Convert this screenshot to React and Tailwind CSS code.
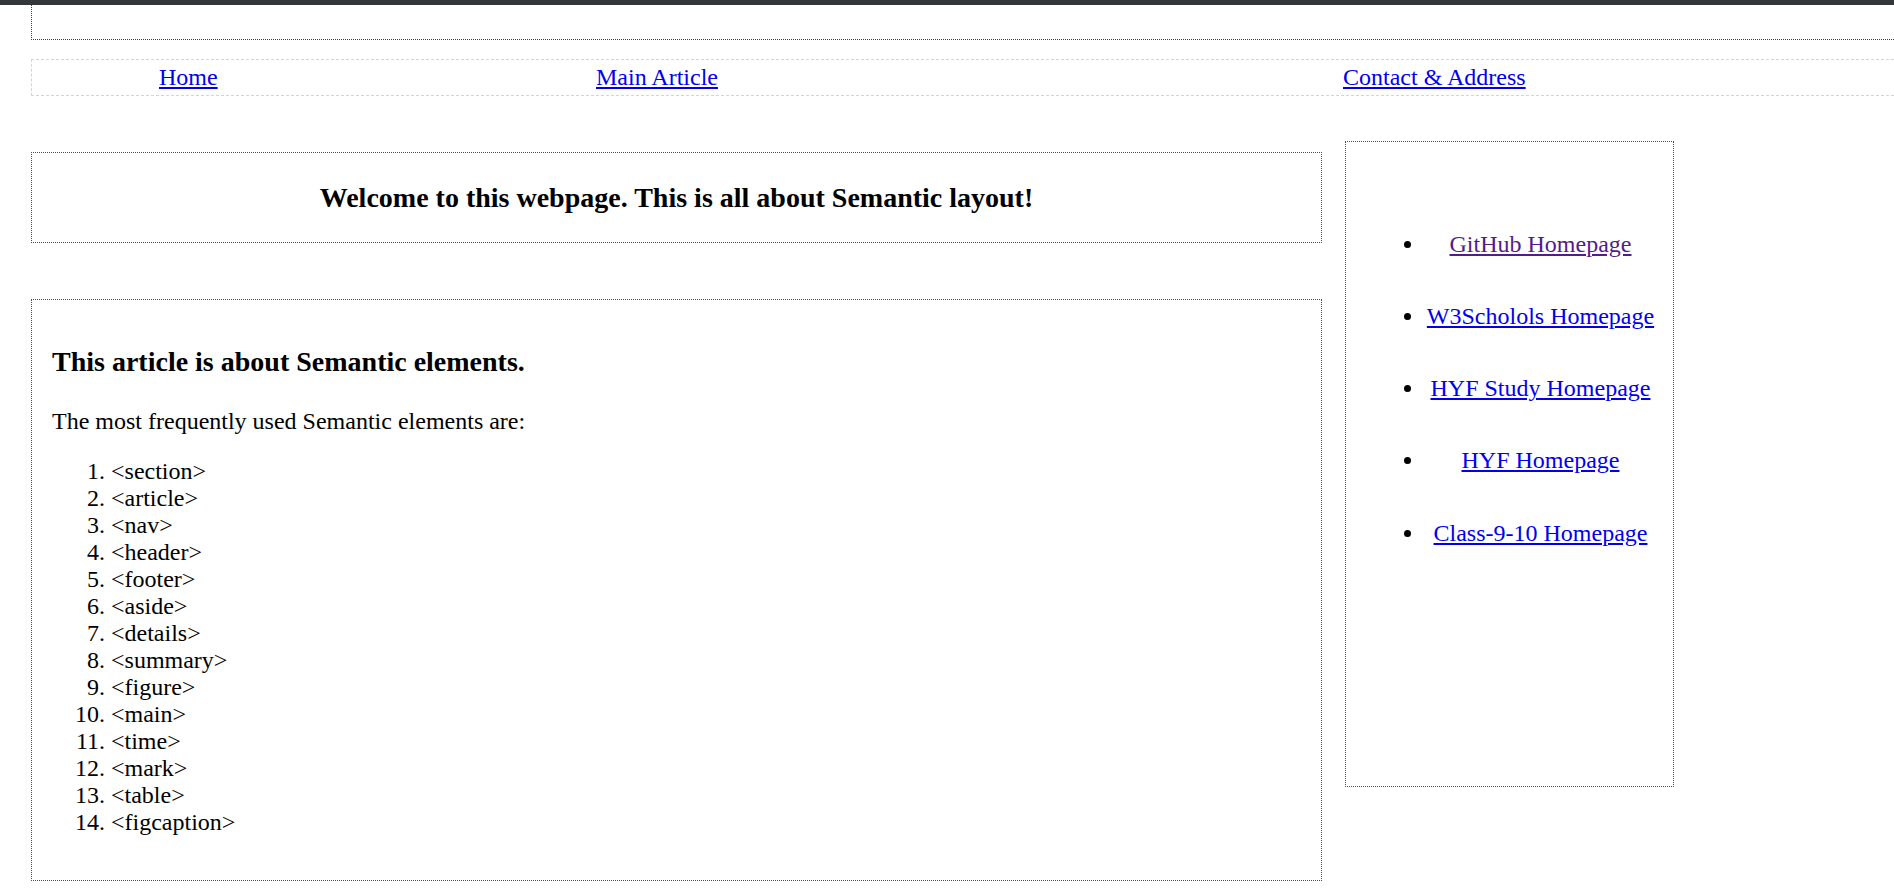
import React from "react";

const elements = [
  "<section>",
  "<article>",
  "<nav>",
  "<header>",
  "<footer>",
  "<aside>",
  "<details>",
  "<summary>",
  "<figure>",
  "<main>",
  "<time>",
  "<mark>",
  "<table>",
  "<figcaption>",
];

const links = [
  { label: "GitHub Homepage", visited: true },
  { label: "W3Scholols Homepage" },
  { label: "HYF Study Homepage" },
  { label: "HYF Homepage" },
  { label: "Class-9-10 Homepage" },
];

export default function App() {
  return (
    <div className="w-[1894px] h-[889px] overflow-hidden bg-white text-black font-['Liberation_Serif','Times_New_Roman',serif]">
      <div className="h-[5px] bg-[#35363a]" />
      <header className="ml-[31px] -mr-[20px] h-[35px] border-l border-b border-dotted border-[#cc0000]" />
      <nav className="mt-[19px] ml-[31px] -mr-[20px] h-[37px] border border-dashed border-[#ffc0cb] flex items-center text-[24px] leading-[27px]">
        <div className="w-[564px] pl-[127px]">
          <a href="#" className="text-[#0000ee] underline">Home</a>
        </div>
        <div className="w-[747px]">
          <a href="#" className="text-[#0000ee] underline">Main Article</a>
        </div>
        <div>
          <a href="#" className="text-[#0000ee] underline">Contact &amp; Address</a>
        </div>
      </nav>

      <div className="mt-[45px] flex items-start">
        <main className="ml-[31px] mt-[11px] w-[1291px] flex flex-col">
          <section className="h-[91px] border border-dotted border-[#008000] flex items-center justify-center">
            <h3 className="text-[28px] leading-[32px] font-bold">
              Welcome to this webpage. This is all about Semantic layout!
            </h3>
          </section>
          <article className="mt-[56px] h-[582px] border border-dotted border-[#008000] px-[20px]">
            <h3 className="mt-[46px] text-[28px] leading-[32px] font-bold">
              This article is about Semantic elements.
            </h3>
            <p className="mt-[30px] text-[24px] leading-[27px]">
              The most frequently used Semantic elements are:
            </p>
            <ol className="mt-[23px] pl-[59px] list-decimal text-[24px] leading-[27px]">
              {elements.map((e) => (
                <li key={e}>{e}</li>
              ))}
            </ol>
          </article>
        </main>

        <aside className="ml-[23px] w-[329px] h-[646px] border border-dotted border-[#a52a2a]">
          <ul className="mt-[66px] pl-[79px] pr-[17px] list-disc text-[24px] leading-[27px]">
            {links.map((l) => (
              <li key={l.label} className="py-[22.65px] text-center whitespace-nowrap">
                <a
                  href="#"
                  className={l.visited ? "text-[#551a8b] underline" : "text-[#0000ee] underline"}
                >
                  {l.label}
                </a>
              </li>
            ))}
          </ul>
        </aside>
      </div>
    </div>
  );
}
